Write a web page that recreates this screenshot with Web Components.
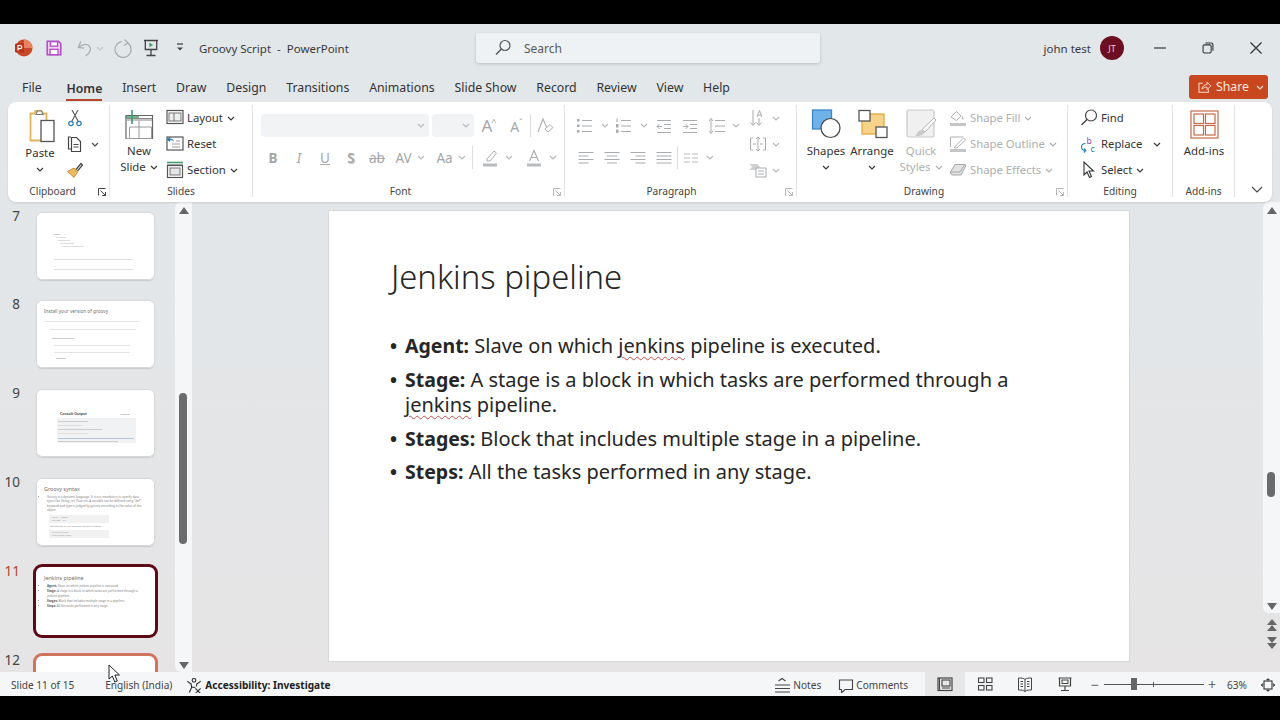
<!DOCTYPE html>
<html lang="en">
<head>
<meta charset="utf-8">
<title>Groovy Script - PowerPoint</title>
<style>
  html, body { margin: 0; padding: 0; background: #000; }
  body { width: 1280px; height: 720px; overflow: hidden; font-family: "Noto Sans", "Open Sans", sans-serif; color: #3c3c3c; }
</style>
</head>
<body>
<pp-app>
  <pp-titlebar slot="title"></pp-titlebar>
  <pp-tabs slot="tabs"></pp-tabs>
  <pp-ribbon slot="ribbon"></pp-ribbon>
  <pp-thumbs slot="thumbs"></pp-thumbs>
  <pp-canvas slot="canvas">
    <pp-slide>
      <span slot="title">Jenkins pipeline</span>
      <pp-bullet><b>Agent:</b> Slave on which <u>jenkins</u> pipeline is executed.</pp-bullet>
      <pp-bullet><b>Stage:</b> A stage is a block in which tasks are performed through a <u>jenkins</u> pipeline.</pp-bullet>
      <pp-bullet><b>Stages:</b> Block that includes multiple stage in a pipeline.</pp-bullet>
      <pp-bullet><b>Steps:</b> All the tasks performed in any stage.</pp-bullet>
    </pp-slide>
  </pp-canvas>
  <pp-statusbar slot="status"></pp-statusbar>
</pp-app>

<script>
// every icon is drawn on a 20x20 box unless it says otherwise
const ICONS = {
  logo: '<circle cx="11" cy="10" r="8.5" fill="#c9472a"/><path d="M11 1.5a8.5 8.5 0 0 1 8.5 8.5H11z" fill="#e8825f"/><rect x="2" y="5.5" width="9" height="9" rx="1.2" fill="#b7351a"/><path d="M5 12.5v-5h2.2a1.6 1.6 0 0 1 0 3.2H5" fill="none" stroke="#fff" stroke-width="1.2"/>',
  save: '<path d="M2.5 2.5h12.5l2.5 2.5v12.5h-15z" fill="#f0d4f4" stroke="#b24fc6" stroke-width="1.8"/><rect x="6" y="3" width="8" height="5" fill="#fff" stroke="#b24fc6" stroke-width="1.5"/><rect x="5.5" y="11.5" width="9" height="6" fill="#fff" stroke="#b24fc6" stroke-width="1.5"/>',
  undo: '<path d="M5 2.500 2.500 9l6 .5M3 8.800c3.200-3.400 8-4 10.800-1.400 2.700 2.800 1.500 7.400-3.600 10.600" fill="none" stroke="#a9acaf" stroke-width="1.300"/>',
  redo: '<path d="M12.500 1.500l3.500 3.500-4 2.500M15.800 5a8 8 0 1 1-5.800-1.500" fill="none" stroke="#a9acaf" stroke-width="1.200"/>',
  present: '<path d="M3 2.500h14M4.300 2.500v9h11.400v-9M10 11.500v5.500M5.500 17.500h9" fill="none" stroke="#444" stroke-width="1.300"/><path d="M8.300 4.600v4.600l3.800-2.300z" fill="#3f9d6d"/>',
  qat: '<path d="M7 6h6" stroke="#444" stroke-width="1.300"/><path d="M7 9.500l3 3 3-3z" fill="#444"/>',
  search: '<circle cx="12" cy="7.500" r="5" fill="none" stroke="#555" stroke-width="1.200"/><path d="M8.400 11 3 16.500" stroke="#555" stroke-width="1.400"/>',
  min: '<path d="M4 10h12" stroke="#333" stroke-width="1.200"/>',
  restore: '<rect x="4.500" y="6.500" width="9" height="9" rx="1.600" fill="none" stroke="#333" stroke-width="1.200"/><path d="M7 4.500h6.500a2 2 0 0 1 2 2V13" fill="none" stroke="#333" stroke-width="1.200"/>',
  close: '<path d="M4.500 4.500l11 11M15.500 4.500l-11 11" stroke="#333" stroke-width="1.200"/>',
  share: '<path d="M8 5H3.500v10.500h11V12" fill="none" stroke="#fbdccf" stroke-width="1.200"/><path d="M7 12c.4-3.600 3-5.400 6-5.400V3.500l4.500 4.600-4.500 4.400V9.600c-2.400 0-4.400.6-6 2.400z" fill="none" stroke="#fbdccf" stroke-width="1.100"/>',
  paste: '<g transform="translate(2.500 2)"><path d="M4 5.500h4l1-2.500h6l1 2.500h4v27H4z" fill="#fff" stroke="#e0b45c" stroke-width="1.800"/><path d="M9.500 6.500 11 3h4l1.500 3.500z" fill="#fff" stroke="#777" stroke-width="1.100"/><rect x="14.500" y="12.500" width="13" height="21" fill="#fff" stroke="#555" stroke-width="1.300"/></g>',
  cut: '<path d="M7 2l6 11M13 2 7 13" stroke="#555" stroke-width="1.100"/><circle cx="6" cy="15.500" r="2.200" fill="none" stroke="#2b7cb5" stroke-width="1.200"/><circle cx="14" cy="15.500" r="2.200" fill="none" stroke="#2b7cb5" stroke-width="1.200"/>',
  copy: '<path d="M6 3H3.500v12H6" fill="none" stroke="#444" stroke-width="1.200"/><path d="M6.500 3.500h5l4 4v10h-9z" fill="#fff" stroke="#444" stroke-width="1.200"/><path d="M8.500 10.500h5M8.500 13h5" stroke="#444"/>',
  painter: '<path d="M2.500 11.500 9 8l3.500 4-3.500 5.500C7 15.500 5 13.500 2.500 11.500z" fill="#f0b95a" stroke="#b47a20" stroke-width=".8"/><path d="M11 9.500l5-6 1.500 1.500-5 6" fill="none" stroke="#444" stroke-width="1.200"/>',
  newslide: '<path d="M2 6.500h26.500V30H2z" fill="#fff" stroke="#666" stroke-width="1.200"/><path d="M2.500 9.500h25.500M2.500 11h25.500" stroke="#888"/><path d="M15 11.500V29.500M5.500 18h22M5.500 18v11.500h22V18" fill="none" stroke="#999"/><path d="M8 1v14M1 8h14" stroke="#3f9d6d" stroke-width="1.600"/>',
  layout: '<rect x="2" y="2.500" width="16" height="13" fill="#fff" stroke="#555" stroke-width="1.200"/><rect x="4" y="5" width="12" height="8" fill="#eee" stroke="#777"/><path d="M9 5v8" stroke="#777"/>',
  reset: '<rect x="2" y="3" width="16" height="13" fill="#fff" stroke="#555" stroke-width="1.200"/><path d="M11 7h4M7 10h8M7 13h8" stroke="#999"/><path d="M1.500 5.500 5 2.500v2c2 0 3.500 1 4 3-1-1-2.500-1.500-4-1.200v1.800z" fill="#2b7cb5"/>',
  section: '<path d="M2 2.500h16" stroke="#3f9d6d" stroke-width="1.600"/><rect x="2.500" y="5.500" width="15" height="12" fill="#fff" stroke="#555" stroke-width="1.200"/><rect x="5" y="8" width="10" height="7" fill="#e6e6e6" stroke="#777"/><path d="M2 5h16" stroke="#555"/>',
  launcher: '<path d="M1.500 1.500h7M1.500 1.500v7" fill="none" stroke="currentColor"/><path d="M3.500 3.500 8.500 8.500M8.500 5v3.500H5" fill="none" stroke="currentColor"/>',
  bullets: '<g fill="#a9acaf"><rect x="1" y="3" width="2.500" height="2.500"/><rect x="1" y="8.500" width="2.500" height="2.500"/><rect x="1" y="14" width="2.500" height="2.500"/></g><path d="M6 4.500h10M6 10h10M6 15.500h10" stroke="#a9acaf"/>',
  numbers: '<g fill="#a9acaf"><rect x="1.500" y="2.500" width="1.200" height="3.500"/><rect x="1" y="8" width="2.500" height="3.500"/><rect x="1" y="13.500" width="2.500" height="3.500"/></g><path d="M6 4.500h10M6 10h10M6 15.500h10" stroke="#a9acaf"/>',
  outdent: '<path d="M3 4.500h14M10 8.500h7M10 12.500h7M3 16.500h14M8 10.500H3M5.500 8 3 10.500 5.500 13" fill="none" stroke="#a9acaf"/>',
  indent: '<path d="M3 4.500h14M10 8.500h7M10 12.500h7M3 16.500h14M3 10.500h5M5.500 8 8 10.500 5.500 13" fill="none" stroke="#a9acaf"/>',
  spacing: '<path d="M8 4.500h10M8 10h10M8 15.500h10M4 3v14M2 5l2-2.500L6 5M2 15l2 2.500L6 15" fill="none" stroke="#a9acaf"/>',
  left: '<path d="M2.500 4.500h15M2.500 8h10M2.500 11.500h15M2.500 15h10" stroke="#a9acaf"/>',
  center: '<path d="M2.500 4.500h15M5 8h10M2.500 11.500h15M5 15h10" stroke="#a9acaf"/>',
  right: '<path d="M2.500 4.500h15M7.500 8h10M2.500 11.500h15M7.500 15h10" stroke="#a9acaf"/>',
  justify: '<path d="M2.500 4.500h15M2.500 8h15M2.500 11.500h15M2.500 15h15" stroke="#a9acaf"/>',
  columns: '<path d="M3 6h6M11 6h6M3 10h6M11 10h6M3 14h6M11 14h6" stroke="#b5b8bb"/>',
  textdir: '<path d="M5 2v15M2.500 14.500 5 17.500l2.500-3M11 17V10M8.500 14.500 11 17.500l2.500-3" fill="none" stroke="#a9acaf"/><path d="M9 9l2.500-6.500L14 9M9.800 7h3.400" fill="none" stroke="#a9acaf"/>',
  aligntext: '<path d="M5 4H2.500v12H5M15 4h2.500v12H15M10 3v14M8 5l2-2 2 2M8 15l2 2 2-2M5 10h3M12 10h3" fill="none" stroke="#a9acaf"/>',
  smartart: '<path d="M1.500 4h8l2.500 3-2.500 3h-8l2.500-3z" fill="#cfd1d3"/><rect x="8" y="8" width="10" height="9" fill="#fff" stroke="#a9acaf"/><path d="M10 11h6M10 14h6" stroke="#a9acaf"/>',
  highlight: '<path d="M7 11 14 3l2.500 2-6.500 8H7z" fill="none" stroke="#a9acaf"/><path d="M3 15.500h14v3H3z" fill="#b8babc"/>',
  color: '<path d="M5.500 13 10 2.500 14.500 13M7 9.500h6" fill="none" stroke="#a9acaf" stroke-width="1.100"/><path d="M3 15.500h14v3H3z" fill="#b8babc"/>',
  eraser: '<path d="M3 16 8 3l4 9" fill="none" stroke="#a9acaf" stroke-width="1.100"/><path d="M10 13l5-4.500 3 3-5 4.500z" fill="#fff" stroke="#a9acaf"/>',
  shapes: '<rect x="1.500" y="1" width="19" height="19" fill="#6fb2ea" stroke="#3e86c8" stroke-width="1.300"/><circle cx="19.500" cy="19" r="9.500" fill="#fff" stroke="#444" stroke-width="1.200"/>',
  arrange: '<rect x="5" y="5" width="22" height="20" fill="#f7d489" stroke="#e0a93e" stroke-width="1.300"/><rect x="2" y="1.500" width="11" height="10.500" fill="#fff" stroke="#555" stroke-width="1.300"/><rect x="19" y="18" width="11" height="10.500" fill="#fff" stroke="#555" stroke-width="1.300"/>',
  quick: '<rect x="1" y="1" width="27" height="27" rx="1.500" fill="#f0f0f0" stroke="#c9c9c9" stroke-width="1.200"/><path d="M30 11 19 23l-3-2.500L28 9z" fill="#fff" stroke="#b0b0b0"/><path d="M16 21c-3 0-5 2-6.500 6 3 .5 7-.5 9.500-3.500z" fill="#c9c9c9"/>',
  fill: '<path d="M3 9l5.500-5.500L13 8l-4.500 4.500z" fill="#fff" stroke="#aeb0b2"/><path d="M14 8c1.500 1.500 2 3 1 3.500S13.500 10 14 8z" fill="#aeb0b2"/><path d="M2 15h16v3H2z" fill="#c3c5c7"/>',
  outline: '<path d="M2.500 13V3h13M6.500 13 15.500 4l2 2-8.500 8H6.500z" fill="none" stroke="#aeb0b2"/><path d="M2 15h16v3H2z" fill="#c3c5c7"/>',
  effects: '<path d="M2.500 12 7 4.500h10c1 0 .8 2-.3 3.500L13 15H5c-1.500 0-3-1.500-2.500-3z" fill="#e3e3e3" stroke="#a3a5a7"/><path d="M2.500 12H12l4.500-7" fill="none" stroke="#a3a5a7"/>',
  find: '<circle cx="12" cy="7.500" r="5.500" fill="none" stroke="#444" stroke-width="1.200"/><path d="M8 11.500 2.500 17" stroke="#444" stroke-width="1.400"/>',
  replace: '<path d="M6.500 9.500C4 9.500 2.500 11 2.500 13s1.500 3.500 4 3.500M4.800 14.500l2 2-2 2" fill="none" stroke="#2b7cb5" stroke-width="1.100"/><text x="7.500" y="9.500" font-size="8.500" font-family="Noto Sans" fill="#9a3fb0">b</text><text x="11.500" y="17.500" font-size="9" font-family="Noto Sans" fill="#2b7cb5">c</text>',
  select: '<path d="M5 2v13l3-3 2.500 5.500 2-1-2.500-5.500h4.500z" fill="#fff" stroke="#333" stroke-width="1.100"/>',
  addins: '<rect x="1" y="1" width="27" height="27" fill="#fff" stroke="#c8684a" stroke-width="1.200"/><rect x="4" y="4" width="9.500" height="9.500" fill="none" stroke="#c8684a" stroke-width="1.200"/><rect x="15.500" y="4" width="9.500" height="9.500" fill="none" stroke="#c8684a" stroke-width="1.200"/><rect x="4" y="15.500" width="9.500" height="9.500" fill="none" stroke="#c8684a" stroke-width="1.200"/><rect x="15.500" y="15.500" width="9.500" height="9.500" fill="none" stroke="#c8684a" stroke-width="1.200"/>',
  access: '<circle cx="8.500" cy="3.500" r="2" fill="none" stroke="#222" stroke-width="1.100"/><path d="M1.500 4.500c2 2 3.500 2.500 4 3L6 11l-2.500 5.500M15.500 4.500c-2 2-3.500 2.500-4 3l-.5 2.500M6 11h4" fill="none" stroke="#222" stroke-width="1.100"/><path d="M10 12l5.500 5.500M15.500 12 10 17.500" stroke="#222" stroke-width="1.100"/>',
  notes: '<path d="M5 4 8.500 1.500 12 4" fill="none" stroke="#444" stroke-width="1.100" transform="translate(-.5 1)"/><path d="M1 9h15M1 12.500h15M1 16h15" stroke="#444" stroke-width="1.100"/>',
  comments: '<path d="M1.500 3h13v9.500H7L3.500 16v-3.500h-2z" fill="none" stroke="#444" stroke-width="1.100"/>',
  normal: '<rect x="2" y="3" width="14" height="12.500" fill="none" stroke="#444" stroke-width="1.200"/><rect x="6" y="5" width="8" height="6" fill="none" stroke="#444" stroke-width="1.100"/><path d="M6 13h8M3.500 3v12.500" stroke="#444"/>',
  sorter: '<rect x="2.500" y="3" width="5.500" height="4.500" fill="none" stroke="#444" stroke-width="1.100"/><rect x="10.500" y="3" width="5.500" height="4.500" fill="none" stroke="#444" stroke-width="1.100"/><rect x="2.500" y="10.500" width="5.500" height="4.500" fill="none" stroke="#444" stroke-width="1.100"/><rect x="10.500" y="10.500" width="5.500" height="4.500" fill="none" stroke="#444" stroke-width="1.100"/>',
  reading: '<path d="M9 4.500C7.500 3 5 3 2.500 3v12c2.500 0 5 0 6.500 1.500C10.500 15 13 15 15.500 15V3C13 3 10.500 3 9 4.500zM9 4.500v12M4.500 6.500h2.500M4.500 9h2.500M4.500 11.500h2.500M11 6.500h2.500M11 9h2.500M11 11.500h2.500" fill="none" stroke="#444"/>',
  show: '<path d="M2.500 3h13M3.500 3v8h11V3M9 11v4M5 15.500h8" fill="none" stroke="#444" stroke-width="1.200"/><rect x="6" y="5" width="6" height="3.500" fill="none" stroke="#444"/>',
  fit: '<rect x="5" y="5" width="8" height="8" fill="none" stroke="#333" stroke-width="1.100"/><path d="M9 2.500 7.500 4h3zM9 15.500 7.500 14h3zM2 9l1.500-1.500v3zM16 9l-1.500-1.500v3z" fill="#333" stroke="#333" stroke-width=".6"/>',
};

function icon(name, size = 20, view = 20, viewH) {
  const h = viewH || view;
  return `<svg width="${size}" height="${size * h / view}" viewBox="0 0 ${view} ${h}" aria-hidden="true" style="display:block;flex:none">${ICONS[name]}</svg>`;
}
const chev = (c = '#444') => `<svg width="8" height="5" viewBox="0 0 8 5" style="display:block;flex:none" aria-hidden="true"><path d="M1 1l3 3 3-3" fill="none" stroke="${c}" stroke-width="1.100"/></svg>`;
const GREY = '#b4b6b8';

class PpApp extends HTMLElement {
  connectedCallback() {
    this.attachShadow({ mode: 'open' }).innerHTML = `
    <style>
    :host {
      display: block;
      width: 1280px;
      height: 720px;
      background: #000;
      padding: 24px 0;
      box-sizing: border-box;
    }
    .win {
      height: 672px;
      position: relative;
      display: grid;
      grid-template-rows: 48px 30px 100px 470px 24px;
      grid-template-columns: 192px 1fr;
      background: linear-gradient(180deg, #e2e7ea 0%, #e3e6e8 45%, #e6e4e5 100%);
    }
    ::slotted([slot="title"]), ::slotted([slot="tabs"]), ::slotted([slot="ribbon"]), ::slotted([slot="status"]) { grid-column: 1 / 3; }
    .cursor { position: absolute; left: 108px; top: 640px; }
    </style>
    <div class="win">
      <slot name="title"></slot>
      <slot name="tabs"></slot>
      <slot name="ribbon"></slot>
      <slot name="thumbs"></slot>
      <slot name="canvas"></slot>
      <slot name="status"></slot>
      <svg class="cursor" width="13" height="19" viewBox="0 0 13 19"><path d="M1 1v14l3.300-3 2.500 6 2.500-1-2.500-6H11.500z" fill="#fff" stroke="#222" stroke-width="1"/></svg>
    </div>`;
  }
}

class PpTitlebar extends HTMLElement {
  connectedCallback() {
    this.attachShadow({ mode: 'open' }).innerHTML = `
    <style>
    :host { display: grid; grid-template-columns: 476px 344px 1fr; align-items: center; font-size: 11.500px; color: #3a3a3a; }
    .qat { display: flex; align-items: center; padding-left: 13px; }
    .title { margin-left: 9px; white-space: pre; }
    .search { height: 30px; background: #eff2f4; border-radius: 3px; box-shadow: 0 1px 3px rgba(0,0,0,.18); display: flex; align-items: center; padding-left: 17px; color: #5a5a5a; font-size: 12px; }
    .right { display: flex; align-items: center; justify-content: flex-end; }
    .avatar { width: 24px; height: 24px; border-radius: 50%; background: #6d0f22; color: #e9cdd2; font-size: 9px; display: flex; align-items: center; justify-content: center; margin: 0 12px 0 9px; }
    .ctl { width: 48px; display: flex; justify-content: center; }
    </style>
    <div class="qat">
      ${icon('logo', 20)}
      <span style="width:12px"></span>${icon('save', 18)}
      <span style="width:13px"></span>${icon('undo', 19)}
      <span style="width:1px"></span>${chev('#c4c6c8')}
      <span style="width:8px"></span>${icon('redo', 20)}
      <span style="width:9px"></span>${icon('present', 20)}
      <span style="width:9px"></span>${icon('qat', 20)}
      <span class="title">Groovy Script  -  PowerPoint</span>
    </div>
    <div class="search">${icon('search', 20)}<span style="padding-left:11px">Search</span></div>
    <div class="right">
      <span>john test</span>
      <span class="avatar">JT</span>
      <span class="ctl">${icon('min', 20)}</span>
      <span class="ctl">${icon('restore', 18)}</span>
      <span class="ctl">${icon('close', 20)}</span>
    </div>`;
  }
}

class PpTabs extends HTMLElement {
  connectedCallback() {
    const names = ['File', 'Home', 'Insert', 'Draw', 'Design', 'Transitions', 'Animations', 'Slide Show', 'Record', 'Review', 'View', 'Help'];
    this.attachShadow({ mode: 'open' }).innerHTML = `
    <style>
    :host { display: flex; align-items: center; gap: 19.800px; padding: 1px 12px 0 22px; font-size: 12.300px; color: #333; box-sizing: border-box; }
    span { line-height: 24px; white-space: nowrap; }
    .on { font-weight: 600; color: #333; border-bottom: 2px solid #b7452c; line-height: 21px; margin-top: 3px; }
    .file { margin-right: 5px; }
    .share { margin-left: auto; width: 79px; height: 24px; box-sizing: border-box; background: #c9471f; border-radius: 3px; color: #fbe7de; display: flex; align-items: center; padding-left: 7px; gap: 3px; font-size: 12.300px; margin-top: -1px; }
    .share span { line-height: 24px; flex: 1; }
    .share svg:last-child { margin-right: 4px; }
    </style>
    ${names.map(n => `<span class="${n === 'Home' ? 'on' : n === 'File' ? 'file' : ''}">${n}</span>`).join('')}
    <div class="share">${icon('share', 17)}<span>Share</span>${chev('#fbe7de')}</div>`;
  }
}

class PpGroup extends HTMLElement {
  connectedCallback() {
    const off = this.hasAttribute('off');
    const launcher = this.hasAttribute('launcher');
    this.attachShadow({ mode: 'open' }).innerHTML = `
    <style>
    :host { display: flex; flex-direction: column; width: ${this.getAttribute('width')}px; flex: none; box-sizing: border-box; position: relative; border-right: 1px solid #e2e3e5; margin-bottom: 5px; }
    .body { height: 82px; display: flex; }
    .label { height: 12px; line-height: 12px; text-align: center; font-size: 10.200px; color: #444; padding-right: ${this.getAttribute('lpad') || 0}px; }
    .launch { position: absolute; right: 2px; bottom: 0; width: 10px; height: 10px; color: ${off ? '#b5b7b9' : '#444'}; }
    </style>
    <div class="body"><slot></slot></div>
    <div class="label">${this.getAttribute('label')}</div>
    ${launcher ? `<div class="launch">${icon('launcher', 10, 10)}</div>` : ''}`;
  }
}

// big button: icon on top, up to two lines of text under it
class PpBig extends HTMLElement {
  connectedCallback() {
    const w = +this.getAttribute('iw');
    const view = +this.getAttribute('view');
    const lines = (this.getAttribute('text') || '').split('|');
    const col = this.hasAttribute('off') ? '#adafb1' : '#333';
    const plain = this.hasAttribute('nochev');
    const inlineChev = this.hasAttribute('inline');
    const last = lines.length - 1;
    this.attachShadow({ mode: 'open' }).innerHTML = `
    <style>
    :host { display: flex; flex-direction: column; align-items: center; width: ${this.getAttribute('width')}px; flex: none; font-size: 11.400px; color: ${col}; }
    .i { height: ${this.getAttribute('ih') || 38}px; display: flex; align-items: center; justify-content: center; }
    .l { height: 16px; line-height: 16px; display: flex; align-items: center; gap: 4px; white-space: nowrap; }
    </style>
    <div class="i">${icon(this.getAttribute('icon'), w, view, +this.getAttribute('viewh') || view)}</div>
    ${lines.map((t, n) => `<div class="l">${t}${inlineChev && n === last ? chev(col) : ''}</div>`).join('')}
    ${!plain && !inlineChev ? `<div class="l">${chev(col)}</div>` : ''}`;
  }
}

// small row of a ribbon column: icon, text, chevron
class PpRow extends HTMLElement {
  connectedCallback() {
    const col = this.hasAttribute('off') ? '#adafb1' : '#333';
    this.attachShadow({ mode: 'open' }).innerHTML = `
    <style>
    :host { display: flex; align-items: center; height: 26px; font-size: 11.300px; color: ${col}; white-space: nowrap; }
    .t { margin-left: ${this.getAttribute('gap') || 2}px; position: relative; top: -.5px; }
    .c { margin-left: ${this.getAttribute('cgap') || 4}px; }
    </style>
    ${icon(this.getAttribute('icon'), 20)}
    <span class="t">${this.getAttribute('text') || ''}</span>
    ${this.hasAttribute('nochev') ? '' : `<span class="c">${chev(col)}</span>`}`;
  }
}

// small greyed tool for the font and paragraph rows
class PpTool extends HTMLElement {
  connectedCallback() {
    this.attachShadow({ mode: 'open' }).innerHTML = `
    <style>
    :host { display: flex; align-items: center; justify-content: center; gap: 5px; height: 23px; width: ${this.getAttribute('width') || 26}px; flex: none; color: #a4a6a8; font-size: 14px; }
    </style>
    <slot></slot>`;
  }
}

class PpRibbon extends HTMLElement {
  connectedCallback() {
    const g = c => chev(c || GREY);
    const tool = (w, inner) => `<pp-tool width="${w}">${inner}</pp-tool>`;
    this.attachShadow({ mode: 'open' }).innerHTML = `
    <style>
    :host { display: flex; margin: 0 8px; padding-top: 3px; height: 100px; box-sizing: border-box; background: #fff; border-radius: 8px; box-shadow: 0 1px 2px rgba(0,0,0,.12); position: relative; }
    .col { display: flex; flex-direction: column; }
    .font { display: flex; flex-direction: column; gap: 9px; padding: 9px 0 0 7px; }
    .r { display: flex; align-items: center; height: 23px; }
    .box { height: 23px; background: #f2f3f4; border-radius: 4px; display: flex; align-items: center; justify-content: flex-end; padding-right: 4px; box-sizing: border-box; }
    .sep { width: 1px; height: 23px; background: #dcdddf; flex: none; }
    .tiny { display: flex; align-items: center; height: 26px; gap: 4px; }
    .small-tool { display: flex; align-items: center; height: 26px; }
    .collapse { position: absolute; right: 9px; bottom: 9px; }
    .bi { font-size: 13.500px; }
    </style>

    <pp-group label="Clipboard" width="102" lpad="12" launcher>
      <pp-big width="50" text="Paste" ih="40" icon="paste" iw="32" view="32" viewh="38" style="margin-left:7px"></pp-big>
      <div class="col">
        <div class="small-tool">${icon('cut', 20)}</div>
        <div class="small-tool" style="gap:6px">${icon('copy', 20)}${chev()}</div>
        <div class="small-tool">${icon('painter', 20)}</div>
      </div>
    </pp-group>

    <pp-group label="Slides" width="143">
      <pp-big width="56" text="New|Slide" inline icon="newslide" iw="30" view="30" style="margin-left:1px"></pp-big>
      <div class="col" style="margin-left:-2px">
        <pp-row icon="layout" text="Layout"></pp-row>
        <pp-row icon="reset" text="Reset" nochev></pp-row>
        <pp-row icon="section" text="Section"></pp-row>
      </div>
    </pp-group>

    <pp-group label="Font" width="312" lpad="16" launcher off>
      <div class="font">
        <div class="r">
          <div class="box" style="width:168px;margin-left:1px">${g()}</div>
          <div class="box" style="width:42px;margin-left:3px">${g()}</div>
          ${tool(29, '<span style="font-size:17px;letter-spacing:-1px">A<sup style="font-size:9px">^</sup></span>')}
          ${tool(27, '<span style="font-size:14px">A<sup style="font-size:9px">ˇ</sup></span>')}
          <span class="sep"></span>
          ${tool(28, icon('eraser', 20))}
        </div>
        <div class="r">
          ${tool(26, '<span class="bi" style="font-weight:700">B</span>')}
          ${tool(26, '<span class="bi" style="font-style:italic">I</span>')}
          ${tool(26, '<span class="bi" style="text-decoration:underline">U</span>')}
          ${tool(26, '<span class="bi" style="font-weight:600;text-shadow:1px 1px 1px #ccc">S</span>')}
          ${tool(26, '<span class="bi" style="text-decoration:line-through">ab</span>')}
          ${tool(40, `<span class="bi">AV</span>${g()}`)}
          ${tool(42, `<span class="bi">Aa</span>${g()}`)}
          <span class="sep"></span>
          ${tool(46, icon('highlight', 20) + g())}
          ${tool(42, icon('color', 20) + g())}
        </div>
      </div>
    </pp-group>

    <pp-group label="Paragraph" width="232" lpad="18" launcher off>
      <div class="font" style="padding-left:8px;width:172px;box-sizing:border-box">
        <div class="r">
          ${tool(38, icon('bullets', 20) + g())}
          ${tool(40, icon('numbers', 20) + g())}
          <span style="width:3px"></span>
          ${tool(26, icon('outdent', 20))}
          ${tool(26, icon('indent', 20))}
          ${tool(40, icon('spacing', 20) + g())}
        </div>
        <div class="r">
          ${tool(26, icon('left', 20))}
          ${tool(26, icon('center', 20))}
          ${tool(26, icon('right', 20))}
          ${tool(26, icon('justify', 20))}
          <span class="sep"></span>
          ${tool(38, icon('columns', 20) + g())}
        </div>
      </div>
      <div class="col" style="margin-left:11px">
        <div class="tiny">${icon('textdir', 20)}${g()}</div>
        <div class="tiny">${icon('aligntext', 20)}${g()}</div>
        <div class="tiny">${icon('smartart', 20)}${g()}</div>
      </div>
    </pp-group>

    <pp-group label="Drawing" width="271" lpad="16" launcher off>
      <pp-big width="50" text="Shapes" icon="shapes" iw="30" view="30" style="margin-left:4px"></pp-big>
      <pp-big width="42" text="Arrange" icon="arrange" iw="31" view="31"></pp-big>
      <pp-big width="56" text="Quick|Styles" inline off icon="quick" iw="31" view="31"></pp-big>
      <div class="col" style="margin-left:-1px">
        <pp-row off icon="fill" text="Shape Fill"></pp-row>
        <pp-row off icon="outline" text="Shape Outline"></pp-row>
        <pp-row off icon="effects" text="Shape Effects"></pp-row>
      </div>
    </pp-group>

    <pp-group label="Editing" width="105">
      <div class="col" style="margin-left:11px">
        <pp-row icon="find" text="Find" nochev></pp-row>
        <pp-row icon="replace" text="Replace" cgap="11"></pp-row>
        <pp-row icon="select" text="Select"></pp-row>
      </div>
    </pp-group>

    <pp-group label="Add-ins" width="62">
      <pp-big width="62" text="Add-ins" nochev icon="addins" iw="29" view="29"></pp-big>
    </pp-group>

    <div class="collapse"><svg width="12" height="7" viewBox="0 0 12 7" style="display:block"><path d="M1 1l5 5 5-5" fill="none" stroke="#444" stroke-width="1.100"/></svg></div>`;
  }
}

class PpScrollbar extends HTMLElement {
  connectedCallback() {
    const up = '<path d="M0 7 5 0l5 7z"/>';
    const down = '<path d="M0 0l5 7 5-7z"/>';
    const nav = this.hasAttribute('nav');
    this.attachShadow({ mode: 'open' }).innerHTML = `
    <style>
    :host { display: flex; flex-direction: column; height: 100%; width: 100%; color: #666; }
    svg { display: block; fill: currentColor; flex: none; }
    .bar { flex: 1; display: flex; flex-direction: column; align-items: center; background: #f5f6f7; padding: 5px 0 3px; border-radius: 6px 0 0 6px; min-height: 0; }
    .track { flex: 1; width: 100%; position: relative; }
    .thumb { position: absolute; left: 4px; width: 8px; top: ${this.getAttribute('thumb-top')}px; height: ${this.getAttribute('thumb-h')}px; background: #6b6b6b; border-radius: 4px; }
    .nav { display: flex; flex-direction: column; align-items: center; gap: 4px; padding: 5px 0 22px; }
    </style>
    <div class="bar">
      <svg width="10" height="7" viewBox="0 0 10 7">${up}</svg>
      <div class="track"><div class="thumb"></div></div>
      <svg width="10" height="7" viewBox="0 0 10 7">${down}</svg>
    </div>
    ${nav ? `<div class="nav">
      <svg width="12" height="14" viewBox="0 0 12 14"><path d="M1 7l5-6 5 6zM1 13l5-6 5 6z"/></svg>
      <svg width="12" height="14" viewBox="0 0 12 14"><path d="M1 1l5 6 5-6zM1 7l5 6 5-6z"/></svg>
    </div>` : ''}`;
  }
}

// one thumbnail in the slide list; the slotted bits are a tiny copy of the slide
class PpThumb extends HTMLElement {
  connectedCallback() {
    const n = this.getAttribute('n');
    const state = this.getAttribute('state') || '';
    this.attachShadow({ mode: 'open' }).innerHTML = `
    <style>
    :host { display: grid; grid-template-columns: 36px 119px; height: 68px; flex: none; }
    .n { font-size: 13.500px; line-height: 18px; width: 20px; text-align: right; margin-top: -5px; color: ${state === 'on' ? '#b0472f' : '#444'}; }
    .s { background: #fff; height: 68px; border-radius: 6px; box-sizing: border-box; overflow: hidden; position: relative; padding: 4px 8px; font-size: 3px; line-height: 4.400px; color: #808080;
         box-shadow: inset 0 0 0 1px #d6d8da, 0 1px 1px #c8cacc; }
    :host([state="on"]) .s { box-shadow: 0 0 0 3px #5c0a16; }
    :host([state="hover"]) .s { box-shadow: 0 0 0 3px #d2735e; }
    </style>
    <div class="n">${n}</div>
    <div class="s"><slot></slot></div>`;
  }
}

class PpThumbs extends HTMLElement {
  connectedCallback() {
    const line = (l, t, w, c = '#dedede') => `<div style="position:absolute;left:${l}px;top:${t}px;width:${w}px;height:1px;background:${c}"></div>`;
    const head = t => `<div style="font-size:5.400px;line-height:8px;color:#707070;padding-top:3px">${t}</div>`;
    this.attachShadow({ mode: 'open' }).innerHTML = `
    <style>
    :host { display: grid; grid-template-columns: 175px 17px; height: 470px; overflow: hidden; }
    .list { display: flex; flex-direction: column; gap: 20.800px; padding-top: 9.600px; overflow: hidden; }
    .block { background: #f1f1f1; margin-top: 2px; padding: 1px 3px; color: #999; font-size: 2.400px; line-height: 3px; }
    ul { margin: 2px 0 0; padding: 0 0 0 3px; list-style: disc; }
    .roomy li { line-height: 5px; }
    b { color: #5a5a5a; }
    </style>
    <div class="list">
      <pp-thumb n="7">
        ${line(18, 22, 6, '#ccc')}${line(20, 25, 10, '#ddd')}${line(22, 28, 12, '#ddd')}${line(24, 31, 14, '#ddd')}${line(26, 34, 22, '#ddd')}${line(18, 47, 79)}${line(18, 57, 79)}
      </pp-thumb>
      <pp-thumb n="8">
        <div style="font-size:4.700px;line-height:8px;color:#707070;padding-top:3px">Install your version of groovy</div>
        ${line(9, 21, 94, '#e4e4e4')}${line(14, 29, 86, '#e4e4e4')}${line(16, 38, 22, '#ccc')}${line(18, 45, 76, '#e4e4e4')}${line(18, 52, 76, '#e4e4e4')}${line(20, 58, 10, '#ccc')}
      </pp-thumb>
      <pp-thumb n="9">
        <div style="position:absolute;left:24px;top:23px;font-size:3.500px;color:#555;font-weight:700">Consult Output</div>
        <div style="position:absolute;left:84px;top:23px;font-size:2.500px;color:#777">Pipeline</div>
        <div style="position:absolute;left:21px;top:29px;width:79px;height:25px;background:#f1f2f3"></div>
        ${line(22, 32, 30, '#ccc')}${line(22, 36, 24, '#ddd')}${line(22, 40, 44, '#ccc')}${line(22, 44, 30, '#ddd')}${line(22, 49, 76, '#b5c5d5')}${line(22, 52, 60, '#ccc')}
      </pp-thumb>
      <pp-thumb n="10">
        ${head('Groovy syntax')}
        <ul style="padding-right:4px"><li>Groovy is a dynamic language. It is not mandatory to specify data types like String, int, float etc. A variable can be defined using "def" keyword and type is judged by groovy according to the value of the object.</li></ul>
        <div class="block" style="margin-left:5px;width:54px">def a = "Rahul"<br>def age = 24</div>
        <div style="margin:2px 0 0 6px;font-size:2.400px;line-height:3px">Commands to find class of a variable through</div>
        <div class="block" style="margin-left:5px;width:54px">println(a.class)<br>println(age.class)</div>
      </pp-thumb>
      <pp-thumb n="11" state="on">
        ${head('Jenkins pipeline')}
        <ul class="roomy"><li><b>Agent:</b> Slave on which jenkins pipeline is executed.</li>
        <li><b>Stage:</b> A stage is a block in which tasks are performed through a jenkins pipeline.</li>
        <li><b>Stages:</b> Block that includes multiple stage in a pipeline.</li>
        <li><b>Steps:</b> All the tasks performed in any stage.</li></ul>
      </pp-thumb>
      <pp-thumb n="12" state="hover"></pp-thumb>
    </div>
    <pp-scrollbar thumb-top="179" thumb-h="151"></pp-scrollbar>`;
  }
}

class PpCanvas extends HTMLElement {
  connectedCallback() {
    this.attachShadow({ mode: 'open' }).innerHTML = `
    <style>
    :host { display: grid; grid-template-columns: 1fr 17px; height: 470px; overflow: hidden; }
    .stage { padding: 9px 0 0 137px; }
    </style>
    <div class="stage"><slot></slot></div>
    <pp-scrollbar nav thumb-top="258" thumb-h="25"></pp-scrollbar>`;
  }
}

class PpSlide extends HTMLElement {
  connectedCallback() {
    this.attachShadow({ mode: 'open' }).innerHTML = `
    <style>
    :host { display: block; width: 800px; height: 450px; box-sizing: border-box; background: #fff; box-shadow: 0 0 0 1px #d6d7d9; padding: 44px 60px 0 61px; color: #262626; }
    .title { font-size: 32.800px; font-weight: 300; line-height: 44px; height: 44px; margin-left: 1px; }
    .body { margin-top: 34px; display: flex; flex-direction: column; gap: 8px; }
    </style>
    <div class="title"><slot name="title"></slot></div>
    <div class="body"><slot></slot></div>`;
  }
}

class PpBullet extends HTMLElement {
  connectedCallback() {
    this.attachShadow({ mode: 'open' }).innerHTML = `
    <style>
    :host { display: grid; grid-template-columns: 15px 1fr; font-size: 20px; line-height: 25.500px; color: #262626; }
    ::slotted(u) { text-decoration: underline wavy #c0504d 1px; text-underline-offset: 3px; }
    ::slotted(b) { font-weight: 700; font-size: 19.500px; }
    .b { font-size: 24px; line-height: 25.500px; margin-left: -1px; }
    </style>
    <span class="b">•</span>
    <span><slot></slot></span>`;
  }
}

class PpStatusbar extends HTMLElement {
  connectedCallback() {
    this.attachShadow({ mode: 'open' }).innerHTML = `
    <style>
    :host { display: flex; align-items: center; height: 24px; background: #f5f6f7; font-size: 10.100px; color: #444; padding: 1px 0 0 11px; box-sizing: border-box; white-space: nowrap; }
    .lang { margin-left: 31px; }
    .acc { margin-left: 14px; display: flex; align-items: center; gap: 3px; color: #222; font-weight: 700; }
    .right { margin-left: auto; display: flex; align-items: center; height: 23px; }
    .btn { display: flex; align-items: center; gap: 2px; }
    .view { width: 40px; height: 24px; margin-top: -1px; display: flex; align-items: center; justify-content: center; }
    .view.on { background: #e6e6e6; }
    .slider { width: 100px; height: 1px; background: #555; position: relative; margin: 0 2px 0 3px; }
    .slider::before { content: ""; position: absolute; left: 27px; top: -6px; width: 6px; height: 12px; background: #666; }
    .slider::after { content: ""; position: absolute; left: 49px; top: -2px; width: 1px; height: 5px; background: #555; }
    .sign { font-size: 14px; color: #666; width: 12px; text-align: center; line-height: 24px; }
    </style>
    <span>Slide 11 of 15</span>
    <span class="lang">English (India)</span>
    <span class="acc">${icon('access', 16, 17)}Accessibility: Investigate</span>
    <div class="right">
      <span class="btn">${icon('notes', 17, 17)}Notes</span>
      <span class="btn" style="margin:0 17px 0 17px">${icon('comments', 16, 16)}Comments</span>
      <span class="view on">${icon('normal', 18, 18)}</span>
      <span class="view">${icon('sorter', 18, 18)}</span>
      <span class="view">${icon('reading', 18, 18)}</span>
      <span class="view">${icon('show', 18, 18)}</span>
      <span class="sign" style="margin-left:4px">−</span>
      <span class="slider"></span>
      <span class="sign">+</span>
      <span style="margin:0 12px 0 9px">63%</span>
      <span style="margin-right:3px">${icon('fit', 18, 18)}</span>
    </div>`;
  }
}

customElements.define('pp-scrollbar', PpScrollbar);
customElements.define('pp-tool', PpTool);
customElements.define('pp-row', PpRow);
customElements.define('pp-big', PpBig);
customElements.define('pp-group', PpGroup);
customElements.define('pp-ribbon', PpRibbon);
customElements.define('pp-tabs', PpTabs);
customElements.define('pp-titlebar', PpTitlebar);
customElements.define('pp-thumb', PpThumb);
customElements.define('pp-thumbs', PpThumbs);
customElements.define('pp-canvas', PpCanvas);
customElements.define('pp-slide', PpSlide);
customElements.define('pp-bullet', PpBullet);
customElements.define('pp-statusbar', PpStatusbar);
customElements.define('pp-app', PpApp);
</script>
</body>
</html>
